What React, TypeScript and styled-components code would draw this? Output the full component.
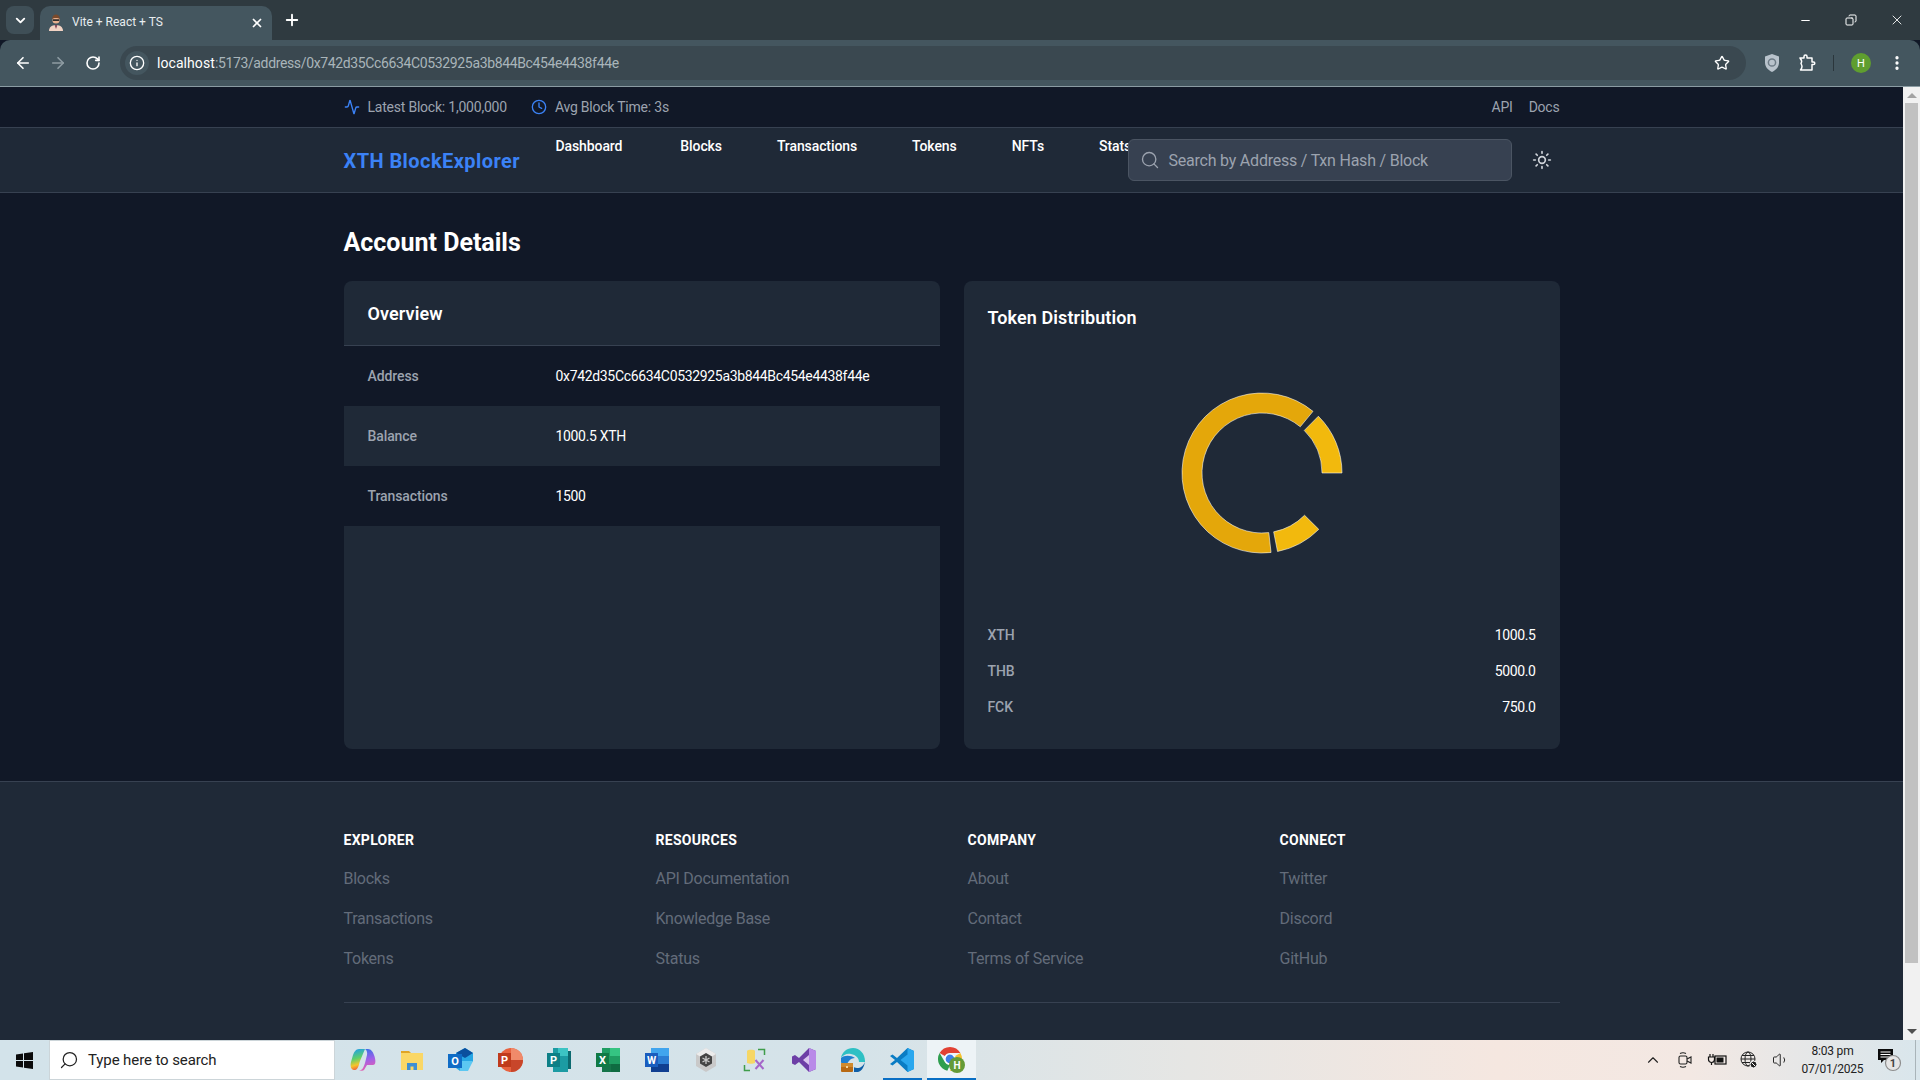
import React from "react"
import styled, { createGlobalStyle } from "styled-components"
import {
    Activity, ArrowLeft, ArrowRight, ChevronDown, ChevronUp, Clock, Copy, EllipsisVertical,
    Info, Minus, Plus, RotateCw, Search, Star, Sun, Volume1, X,
} from "lucide-react"

const UI_FONT = `Roboto, "Liberation Sans", sans-serif`

const GlobalStyle = createGlobalStyle`
    html, body {
        margin: 0;
        height: 100%;
        overflow: hidden;
        background: #111827;
        font-family: ${UI_FONT};
    }
    * {
        box-sizing: border-box;
    }
`

const Screen = styled.div`
    display: flex;
    flex-direction: column;
    height: 1080px;
    width: 1920px;
    overflow: hidden;
`

/* browser chrome */

const TabStrip = styled.div`
    display: flex;
    align-items: flex-end;
    height: 40px;
    flex-shrink: 0;
    background: #2f3a40;
    color: #fff;
    padding-left: 6px;
`

const TabListButton = styled.div`
    display: flex;
    align-items: center;
    justify-content: center;
    width: 28px;
    height: 28px;
    border-radius: 8px;
    background: #3f4f57;
    margin-bottom: 6px;
    margin-right: 6px;
`

const Tab = styled.div`
    display: flex;
    align-items: center;
    width: 232px;
    height: 34px;
    padding: 0 8px 0 8px;
    background: #44565f;
    border-radius: 10px 10px 0 0;
    font-size: 12px;
    gap: 8px;
`

const TabTitle = styled.span`
    flex: 1;
    color: #e8edef;
    margin-bottom: 3px;
`

const NewTab = styled.div`
    display: flex;
    align-items: center;
    justify-content: center;
    width: 28px;
    height: 28px;
    margin: 0 0 6px 6px;
`

const WindowControls = styled.div`
    display: flex;
    margin-left: auto;
    align-self: flex-start;
`

const WindowButton = styled.div`
    display: flex;
    align-items: center;
    justify-content: center;
    width: 46px;
    height: 40px;
`

const Toolbar = styled.div`
    display: flex;
    align-items: center;
    height: 47px;
    flex-shrink: 0;
    background: #44565f;
    border-bottom: 1px solid #8b9ca3;
    border-radius: 10px 10px 0 0;
    padding: 0 11px 0 5px;
    color: #fff;
`

const NavIcon = styled.div<{ $dim?: boolean }>`
    display: flex;
    align-items: center;
    justify-content: center;
    width: 35px;
    height: 34px;
    color: ${props => (props.$dim ? "#8e9ca3" : "#fff")};
`

const Omnibox = styled.div`
    display: flex;
    align-items: center;
    width: 1626px;
    height: 34px;
    margin-left: 10px;
    border-radius: 17px;
    background: #3a4850;
    padding: 0 16px 0 5px;
    font-size: 14px;
`

const SiteInfo = styled.div`
    display: flex;
    align-items: center;
    justify-content: center;
    width: 24px;
    height: 24px;
    border-radius: 50%;
    background: #44565f;
    margin-right: 8px;
`

const Url = styled.div`
    flex: 1;
    color: #a9b5ba;
    letter-spacing: -0.36px;
    b {
        font-weight: 400;
        color: #fff;
        letter-spacing: 0.07px;
    }
`

const ToolbarActions = styled.div`
    display: flex;
    align-items: center;
    margin-left: 17px;
    gap: 17px;
`

const ToolbarDivider = styled.div`
    width: 1px;
    height: 16px;
    background: #2b363c;
`

const Avatar = styled.div`
    display: flex;
    align-items: center;
    justify-content: center;
    width: 20px;
    height: 20px;
    border-radius: 50%;
    background: #5f9e2f;
    color: #fff;
    font-size: 11px;
`

/* the page */

const Viewport = styled.div`
    display: flex;
    flex: 1;
    min-height: 0;
`

const Page = styled.div`
    width: 1903px;
    overflow: hidden;
    background: #111827;
`

const Scrollbar = styled.div`
    display: flex;
    flex-direction: column;
    align-items: center;
    justify-content: space-between;
    width: 17px;
    background: #f1f1f1;
    padding-top: 6px;
    padding-bottom: 6px;
    position: relative;
`

const ScrollArrow = styled.div<{ $down?: boolean }>`
    width: 0;
    height: 0;
    border-left: 5px solid transparent;
    border-right: 5px solid transparent;
    ${props => (props.$down ? "border-top: 5px solid #505050;" : "border-bottom: 5px solid #a3a3a3;")}
`

const ScrollThumb = styled.div`
    position: absolute;
    top: 16px;
    left: 2px;
    width: 13px;
    height: 860px;
    background: #c1c1c1;
`

const Container = styled.div`
    max-width: 1280px;
    margin: 0 auto;
    padding: 0 32px;
`

const TopBar = styled.div`
    height: 41px;
    border-bottom: 1px solid #374151;
    font-size: 14px;
    color: #9ca3af;
`

const TopBarInner = styled(Container)`
    display: flex;
    align-items: center;
    justify-content: space-between;
    height: 40px;
    letter-spacing: -0.22px;
`

const TopBarGroup = styled.div`
    display: flex;
    align-items: center;
    gap: 16px;
`

const Stat = styled.div`
    display: flex;
    align-items: center;
    gap: 8px;
    margin-right: 8px;
    color: #9ca3af;
    svg {
        color: #3b82f6;
    }
`

const NavBar = styled.div`
    height: 65px;
    background: #1f2937;
    border-bottom: 1px solid #374151;
`

const NavInner = styled(Container)`
    display: flex;
    align-items: center;
    height: 64px;
`

const Logo = styled.div`
    font-size: 20px;
    font-weight: 700;
    color: #3b82f6;
    width: 212px;
    flex-shrink: 0;
    letter-spacing: 0.43px;
    margin-top: 1px;
`

const NavLinks = styled.div`
    display: flex;
    align-self: flex-start;
    gap: 55px;
    width: 572px;
    flex-shrink: 0;
    margin-top: 8px;
    font-size: 14px;
    line-height: 20px;
    font-weight: 500;
    letter-spacing: -0.1px;
    color: #fff;
    span:first-child {
        padding-right: 3px;
    }
`

const SearchBox = styled.div`
    display: flex;
    align-items: center;
    width: 384px;
    height: 42px;
    gap: 9px;
    padding: 0 11px;
    background: #374151;
    border: 1px solid #4b5563;
    border-radius: 6px;
    font-size: 16px;
    letter-spacing: -0.22px;
    color: #9ca3af;
`

const ThemeToggle = styled.div`
    display: flex;
    margin-left: 20px;
    color: #d1d5db;
`

const Main = styled(Container)`
    padding-top: 34px;
    padding-bottom: 32px;
`

const Heading = styled.h1`
    margin: 0 0 22px;
    font-size: 25px;
    line-height: 32px;
    font-weight: 700;
    color: #fff;
`

const Columns = styled.div`
    display: grid;
    grid-template-columns: 1fr 1fr;
    gap: 24px;
    height: 468px;
`

const Card = styled.div`
    background: #1f2937;
    border-radius: 8px;
    overflow: hidden;
`

const CardHeader = styled.div`
    height: 65px;
    padding: 21px 24px 0;
    border-bottom: 1px solid #374151;
    font-size: 18px;
    line-height: 24px;
    font-weight: 600;
    letter-spacing: 0.1px;
    color: #fff;
`

const DetailRow = styled.div<{ $stripe?: boolean }>`
    display: flex;
    align-items: center;
    height: 60px;
    padding: 0 24px;
    font-size: 14px;
    background: ${props => (props.$stripe ? "#1f2937" : "#111827")};
`

const DetailLabel = styled.div`
    width: 188px;
    font-weight: 500;
    letter-spacing: -0.1px;
    color: #9ca3af;
`

const DetailValue = styled.div`
    color: #fff;
    letter-spacing: -0.33px;
`

const DistributionBody = styled.div`
    padding: 25px 24px 24px;
`

const DistributionTitle = styled.div`
    font-size: 18px;
    line-height: 24px;
    font-weight: 600;
    letter-spacing: 0.1px;
    color: #fff;
`

const ChartWrap = styled.div`
    display: flex;
    align-items: center;
    justify-content: center;
    height: 256px;
    margin-top: 15px;
`

const Legend = styled.div`
    display: flex;
    flex-direction: column;
    gap: 16px;
    margin-top: 24px;
`

const LegendRow = styled.div`
    display: flex;
    justify-content: space-between;
    font-size: 14px;
    line-height: 20px;
    color: #fff;
    letter-spacing: -0.4px;
    span:first-child {
        color: #9ca3af;
        font-weight: 500;
        letter-spacing: -0.1px;
    }
`

const Footer = styled.div`
    background: #1f2937;
    border-top: 1px solid #374151;
    height: 300px;
    padding-top: 48px;
`

const FooterGrid = styled.div`
    display: grid;
    grid-template-columns: repeat(4, 1fr);
    gap: 32px;
`

const FooterTitle = styled.div`
    font-size: 14px;
    line-height: 20px;
    font-weight: 700;
    letter-spacing: 0.3px;
    color: #fff;
    text-transform: uppercase;
    margin-bottom: 17px;
`

const FooterLink = styled.div`
    font-size: 16px;
    line-height: 24px;
    letter-spacing: -0.25px;
    color: #636c7a;
    margin-bottom: 16px;
    &:last-child {
        margin-bottom: 0;
    }
`

const FooterRule = styled.div`
    height: 1px;
    margin-top: 31px;
    background: #374151;
`

/* windows taskbar */

const Taskbar = styled.div`
    display: flex;
    align-items: center;
    height: 40px;
    flex-shrink: 0;
    background: linear-gradient(90deg, #d3e3ea 0%, #d5e3e9 45%, #e6e6e4 62%, #f5e7e0 78%, #f3e8e3 88%, #d9e6ec 100%);
    color: #111;
`

const StartButton = styled.div`
    display: flex;
    align-items: center;
    justify-content: center;
    width: 49px;
    height: 40px;
`

const TaskSearch = styled.div`
    display: flex;
    align-items: center;
    gap: 9px;
    width: 286px;
    height: 40px;
    padding-left: 9px;
    background: #fff;
    border: 1px solid #ccd5d9;
    font-size: 15px;
    letter-spacing: -0.1px;
    color: #222;
`

const TaskIcons = styled.div`
    display: flex;
    margin-left: 3.5px;
`

const TaskIcon = styled.div<{ $active?: boolean; $running?: boolean }>`
    position: relative;
    display: flex;
    align-items: center;
    justify-content: center;
    width: 49px;
    height: 40px;
    background: ${props => (props.$active ? "#edf3f6" : "transparent")};
    &::after {
        content: "";
        display: ${props => (props.$running ? "block" : "none")};
        position: absolute;
        left: ${props => (props.$active ? "0" : "5px")};
        right: ${props => (props.$active ? "0" : "5px")};
        bottom: 0;
        height: 2px;
        background: #0a6fc4;
    }
`

const Tray = styled.div`
    display: flex;
    align-items: center;
    margin-left: auto;
    height: 40px;
    color: #222;
`

const TrayIcon = styled.div`
    display: flex;
    align-items: center;
    justify-content: center;
    width: 32px;
`

const TrayClock = styled.div`
    width: 71px;
    text-align: center;
    font-size: 12px;
    line-height: 18px;
    letter-spacing: -0.2px;
    color: #222;
`

const Notice = styled.div`
    display: flex;
    align-items: center;
    justify-content: center;
    width: 47px;
    padding-right: 4px;
`

const TrayEdge = styled.div`
    width: 1px;
    height: 40px;
    background: #a9b4b9;
    margin-right: 4px;
`

// angles in degrees, counter clockwise from 3 o'clock like a recharts pie
const arcPath = (cx: number, cy: number, inner: number, outer: number, from: number, to: number) => {
    const point = (r: number, a: number) => {
        const rad = (a * Math.PI) / 180
        return `${(cx + r * Math.cos(rad)).toFixed(2)} ${(cy - r * Math.sin(rad)).toFixed(2)}`
    }
    const large = to - from > 180 ? 1 : 0
    return `M${point(outer, from)} A${outer} ${outer} 0 ${large} 0 ${point(outer, to)} L${point(inner, to)} A${inner} ${inner} 0 ${large} 1 ${point(inner, from)} Z`
}

const DonutChart = () => (
    <svg width="164" height="164" viewBox="0 0 164 164">
        <path d={arcPath(82, 82, 60, 80, 0, 45.2)} fill="#f2b90d" stroke="#fff" strokeOpacity={0.7} strokeWidth={0.8} />
        <path d={arcPath(82, 82, 60, 80, 50.4, 276.5)} fill="#e4a70a" stroke="#fff" strokeOpacity={0.7} strokeWidth={0.8} />
        <path d={arcPath(82, 82, 60, 80, 281.2, 315.2)} fill="#f2b90d" stroke="#fff" strokeOpacity={0.7} strokeWidth={0.8} />
    </svg>
)

const Favicon = () => (
    <svg width="16" height="18" viewBox="0 0 16 18">
        <path d="M1 17c0-4 3-6 7-6s7 2 7 6z" fill="#f2d3c4" />
        <path d="M6.5 11l1.5 4 1.5-4z" fill="#8a4a5a" />
        <circle cx="8" cy="6" r="3.6" fill="#e8b08e" />
        <path d="M4.2 5c0-3 1.5-4.5 3.8-4.5S11.800 2 11.800 5c-1-1.500-6.600-1.500-7.600 0z" fill="#7a4a2c" />
        <rect x="4.800" y="5.300" width="6.400" height="1.600" fill="#222" />
    </svg>
)

const ShieldIcon = () => (
    <svg width="18" height="20" viewBox="0 0 18 20">
        <path d="M9 1l7 2.500v6c0 4.500-3 7.500-7 9.500-4-2-7-5-7-9.500v-6z" fill="#b9c3cc" />
        <circle cx="9" cy="9.500" r="3.600" fill="none" stroke="#6d7b86" strokeWidth="1.500" />
    </svg>
)

const PuzzleIcon = () => (
    <svg width="18" height="18" viewBox="0 0 18 18" fill="none" stroke="#fff" strokeWidth="1.500" strokeLinejoin="round">
        <path d="M2 4h4V2.500a1.500 1.500 0 0 1 3 0V4h5v4h1.500a1.300 1.300 0 0 1 0 2.600H14V16H2.500c.8-1 1.500-2 1.500-3.500 0-1-.5-2-1-3 .5-1.200 1-2 .5-3z" />
    </svg>
)

const WindowsLogo = () => (
    <svg width="17" height="17" viewBox="0 0 17 17" fill="#0b0b0b">
        <path d="M0 2.400l7-1v6.600H0zM8 1.200L17 0v8H8zM0 9h7v6.600l-7-1zM8 9h9v8l-9-1.200z" />
    </svg>
)

const CopilotIcon = () => (
    <svg width="26" height="26" viewBox="0 0 26 26">
        <defs>
            <linearGradient id="copilotA" x1="0.3" y1="0" x2="0.5" y2="1">
                <stop offset="0" stopColor="#1f9fe8" />
                <stop offset="0.45" stopColor="#5fd06a" />
                <stop offset="0.75" stopColor="#f7c52b" />
                <stop offset="1" stopColor="#f0553a" />
            </linearGradient>
            <linearGradient id="copilotB" x1="0.4" y1="0" x2="0.6" y2="1">
                <stop offset="0" stopColor="#3a6fe8" />
                <stop offset="0.5" stopColor="#a060e8" />
                <stop offset="1" stopColor="#ee60a8" />
            </linearGradient>
        </defs>
        <path d="M9 2h6L10 14c-1 3-2 9-5 9H4c-3 0-4-4-3-8l2-7c1-3 3-6 6-6z" fill="url(#copilotA)" />
        <path d="M15 2h3c3 0 5 3 6 6 2 5 2 10-1 10h-6l-3 5c-1 1-3 1-5 0h2c2-1 3-4 4-7l2-8c.5-2 0-5-2-6z" fill="url(#copilotB)" />
    </svg>
)

const FolderIcon = () => (
    <svg width="24" height="22" viewBox="0 0 24 22">
        <path d="M1 2h8l2 2h-10z" fill="#e0a526" />
        <rect x="1" y="4" width="22" height="17" fill="#fad766" />
        <path d="M7 21v-7h10v7h-3.500v-3.500h-3V21z" fill="#3f8fd2" />
    </svg>
)

const TileLetter = styled.text`
    font-family: ${UI_FONT};
    font-weight: 700;
    fill: #fff;
    text-anchor: middle;
`

const OutlookIcon = () => (
    <svg width="26" height="24" viewBox="0 0 26 24">
        <path d="M8 5l9-5 8 5v8l-8 10H12l-4-3z" fill="#26a6e4" />
        <path d="M17 0l8 5-8 5-9-5z" fill="#0a4f9e" />
        <path d="M12 13h13l-5 10h-8z" fill="#5cc8f2" />
        <rect x="0" y="6" width="14" height="14" fill="#0f6cc6" />
        <TileLetter x="7" y="17" fontSize="11">O</TileLetter>
    </svg>
)

const PowerPointIcon = () => (
    <svg width="25" height="24" viewBox="0 0 25 24">
        <circle cx="13" cy="12" r="12" fill="#e8623f" />
        <path d="M13 12h12a12 12 0 0 1-12 12z" fill="#c8462a" />
        <path d="M13 0a12 12 0 0 1 12 12H13z" fill="#f08a6a" />
        <rect x="0" y="5" width="13" height="14" fill="#bf3a1c" />
        <TileLetter x="6.500" y="16" fontSize="11">P</TileLetter>
    </svg>
)

const PublisherIcon = () => (
    <svg width="25" height="24" viewBox="0 0 25 24">
        <rect x="6" y="0" width="15" height="24" fill="#1c9ba3" />
        <rect x="11" y="0" width="10" height="8" fill="#3cc4c4" />
        <rect x="21" y="3" width="3" height="18" fill="#0c6a70" />
        <rect x="0" y="5" width="13" height="14" fill="#0d7f86" />
        <TileLetter x="6.500" y="16" fontSize="11">P</TileLetter>
    </svg>
)

const ExcelIcon = () => (
    <svg width="25" height="24" viewBox="0 0 25 24">
        <rect x="6" y="0" width="18" height="24" fill="#1f9d62" />
        <rect x="14" y="0" width="10" height="8" fill="#35c482" />
        <rect x="14" y="16" width="10" height="8" fill="#0f6b41" />
        <rect x="6" y="16" width="9" height="8" fill="#16754a" />
        <rect x="0" y="5" width="13" height="14" fill="#107a45" />
        <TileLetter x="6.500" y="16" fontSize="11">X</TileLetter>
    </svg>
)

const WordIcon = () => (
    <svg width="25" height="24" viewBox="0 0 25 24">
        <rect x="6" y="0" width="18" height="24" fill="#2b7cd3" />
        <rect x="6" y="0" width="18" height="8" fill="#41a5ee" />
        <rect x="6" y="16" width="18" height="8" fill="#103f91" />
        <rect x="0" y="5" width="13" height="14" fill="#1a5dbe" />
        <TileLetter x="6.500" y="16" fontSize="10.500">W</TileLetter>
    </svg>
)

const UnityIcon = () => (
    <svg width="22" height="24" viewBox="0 0 22 24">
        <path d="M11 0l10 6v12l-10 6-10-6V6z" fill="#c9c9c9" />
        <path d="M11 0l10 6-10 6-10-6z" fill="#ececec" />
        <path d="M11 5l6 3.500v7L11 19l-6-3.500v-7z" fill="#444" />
        <path d="M11 8v8M7.500 10l7 4M14.500 10l-7 4" stroke="#c9c9c9" strokeWidth="1.300" />
    </svg>
)

const ToolIcon = () => (
    <svg width="24" height="24" viewBox="0 0 24 24">
        <path d="M4 3c0-1 7-2 8 0v12c-2 1-6 1-8 0z" fill="#f6d765" />
        <path d="M15 1.500h6.500V7M1.500 17v5.500H7" stroke="#3f9d4a" strokeWidth="1.500" fill="none" />
        <path d="M12.500 12l8 9M20.500 12l-8 9" stroke="#a566c9" strokeWidth="2" />
    </svg>
)

const VisualStudioIcon = () => (
    <svg width="24" height="24" viewBox="0 0 24 24">
        <path d="M17 0l7 3v18l-7 3L7 14l-4 3-3-1.500v-7L3 7l4 3z" fill="#6d3fa6" />
        <path d="M17 0l7 3v18l-7 3z" fill="#b98ae8" />
        <path d="M17 7v10l-6-5z" fill="#d9c6ee" />
    </svg>
)

const EdgeIcon = () => (
    <svg width="25" height="24" viewBox="0 0 25 24">
        <path d="M24 13C24 6 19 0 12 0 6 0 1 4 0 10c2-3 6-5 10-4 5 1 8 4 8 8h6z" fill="#2fc0c4" />
        <path d="M0 10c-1 6 3 12 9 14-3-3-4-8-1-11 1-2 4-3 6-3-4-3-11-3-14 0z" fill="#1d7fd0" />
        <path d="M24 14c-2 4-4 6-8 6-2 0-3-1-3-1v5h4c4-1 6-5 7-10z" fill="#0f5fa8" />
        <rect x="0" y="15" width="12" height="9" rx="1" fill="#b86a14" />
        <rect x="0" y="15" width="12" height="4" fill="#d08a2e" />
        <rect x="5" y="18" width="2" height="2" fill="#f3d69c" />
    </svg>
)

const VsCodeIcon = () => (
    <svg width="24" height="24" viewBox="0 0 24 24">
        <path d="M17.500 0L24 3v18l-6.500 3L7 14l-4.500 3.500L0 16l5-4-5-4 2.500-1.500L7 10z" fill="#0a7cc4" />
        <path d="M17.500 0L24 3v18l-6.500 3zM17.500 6.500L10.500 12l7 5.500z" fill="#2aa7ee" fillRule="evenodd" />
    </svg>
)

const ChromeIcon = () => (
    <svg width="27" height="26" viewBox="0 0 27 26">
        <path d="M12 0a12 12 0 0 1 10.400 6H12a6 6 0 0 0-5.200 3L1.600 6A12 12 0 0 1 12 0z" fill="#e24133" />
        <path d="M22.400 6a12 12 0 0 1-10.400 18l5.200-9a6 6 0 0 0 0-6z" fill="#f6c02c" />
        <path d="M1.600 6l5.200 9a6 6 0 0 0 5.200 3l-2.700 5.700A12 12 0 0 1 1.600 6z" fill="#2f9e4f" />
        <circle cx="12" cy="12" r="5" fill="#3f7fe6" stroke="#fff" strokeWidth="1.200" />
        <circle cx="19" cy="18" r="8" fill="#659b37" />
        <TileLetter x="19" y="21.500" fontSize="10">H</TileLetter>
    </svg>
)

const CameraIcon = () => (
    <svg width="14" height="18" viewBox="0 0 14 18" fill="none" stroke="#222" strokeWidth="1.100">
        <rect x="1" y="5" width="8" height="8" rx="1.500" />
        <path d="M9 8l4-2v6l-4-2M2 2.500c2-1 4-1 6 0M2 15.500c2 1 4 1 6 0" />
    </svg>
)

const BatteryIcon = () => (
    <svg width="20" height="14" viewBox="0 0 20 14">
        <path d="M3 1v3M6 1v3M1.500 4h6v2.500a3 3 0 0 1-6 0zM4.500 9v3" stroke="#111" strokeWidth="1.200" fill="none" />
        <rect x="8" y="3" width="11" height="8" fill="none" stroke="#111" strokeWidth="1.200" />
        <rect x="9.500" y="4.500" width="7" height="5" fill="#111" />
    </svg>
)

const NoInternetIcon = () => (
    <svg width="18" height="18" viewBox="0 0 18 18" fill="none" stroke="#222" strokeWidth="1">
        <circle cx="8" cy="8" r="7" />
        <ellipse cx="8" cy="8" rx="3" ry="7" />
        <path d="M1 8h14M2 4.500h12M2 11.500h12" />
        <circle cx="13.500" cy="13.500" r="3.500" fill="#222" stroke="#fff" />
        <path d="M11.500 11.500l4 4" stroke="#fff" />
    </svg>
)

const NoticeIcon = () => (
    <svg width="26" height="24" viewBox="0 0 26 24">
        <path d="M1 1h15v11H7l-3 3v-3H1z" fill="#0b0b0b" />
        <path d="M3.500 4h10M3.500 6.500h10M3.500 9h10" stroke="#fff" strokeWidth="1" />
        <circle cx="16" cy="15" r="7.500" fill="#e5e5e5" stroke="#8d8d8d" strokeWidth="1.200" />
        <TileLetter x="16" y="19" fontSize="11" style={{ fill: "#444" }}>1</TileLetter>
    </svg>
)

const footerColumns = [
    { title: "Explorer", links: ["Blocks", "Transactions", "Tokens"] },
    { title: "Resources", links: ["API Documentation", "Knowledge Base", "Status"] },
    { title: "Company", links: ["About", "Contact", "Terms of Service"] },
    { title: "Connect", links: ["Twitter", "Discord", "GitHub"] },
]

const details = [
    { label: "Address", value: "0x742d35Cc6634C0532925a3b844Bc454e4438f44e" },
    { label: "Balance", value: "1000.5 XTH" },
    { label: "Transactions", value: "1500" },
]

const tokens = [
    { symbol: "XTH", amount: "1000.5" },
    { symbol: "THB", amount: "5000.0" },
    { symbol: "FCK", amount: "750.0" },
]

const navLinks = ["Dashboard", "Blocks", "Transactions", "Tokens", "NFTs", "Stats"]

const taskApps = [
    <CopilotIcon />, <FolderIcon />, <OutlookIcon />, <PowerPointIcon />, <PublisherIcon />, <ExcelIcon />,
    <WordIcon />, <UnityIcon />, <ToolIcon />, <VisualStudioIcon />, <EdgeIcon />,
]

const App: React.FC = () => {
    return <Screen>
        <GlobalStyle />
        <TabStrip>
            <TabListButton><ChevronDown size={15} strokeWidth={3} /></TabListButton>
            <Tab>
                <Favicon />
                <TabTitle>Vite + React + TS</TabTitle>
                <X size={14} strokeWidth={3} />
            </Tab>
            <NewTab><Plus size={18} strokeWidth={2.5} /></NewTab>
            <WindowControls>
                <WindowButton><Minus size={13} /></WindowButton>
                <WindowButton><Copy size={12} style={{ transform: "scaleX(-1)" }} /></WindowButton>
                <WindowButton><X size={16} strokeWidth={1.3} /></WindowButton>
            </WindowControls>
        </TabStrip>
        <Toolbar>
            <NavIcon><ArrowLeft size={18} strokeWidth={2.2} /></NavIcon>
            <NavIcon $dim><ArrowRight size={18} strokeWidth={2.2} /></NavIcon>
            <NavIcon><RotateCw size={16} strokeWidth={2.4} /></NavIcon>
            <Omnibox>
                <SiteInfo><Info size={16} /></SiteInfo>
                <Url><b>localhost</b>:5173/address/0x742d35Cc6634C0532925a3b844Bc454e4438f44e</Url>
                <Star size={16} strokeWidth={2} />
            </Omnibox>
            <ToolbarActions>
                <ShieldIcon />
                <PuzzleIcon />
                <ToolbarDivider />
                <Avatar>H</Avatar>
                <EllipsisVertical size={18} strokeWidth={2.4} />
            </ToolbarActions>
        </Toolbar>
        <Viewport>
            <Page>
                <TopBar>
                    <TopBarInner>
                        <TopBarGroup>
                            <Stat><Activity size={16} />Latest Block: 1,000,000</Stat>
                            <Stat><Clock size={16} />Avg Block Time: 3s</Stat>
                        </TopBarGroup>
                        <TopBarGroup>
                            <span>API</span>
                            <span>Docs</span>
                        </TopBarGroup>
                    </TopBarInner>
                </TopBar>
                <NavBar>
                    <NavInner>
                        <Logo>XTH BlockExplorer</Logo>
                        <NavLinks>
                            {navLinks.map(link => <span key={link}>{link}</span>)}
                        </NavLinks>
                        <SearchBox>
                            <Search size={20} strokeWidth={1.6} />
                            Search by Address / Txn Hash / Block
                        </SearchBox>
                        <ThemeToggle><Sun size={20} /></ThemeToggle>
                    </NavInner>
                </NavBar>
                <Main>
                    <Heading>Account Details</Heading>
                    <Columns>
                        <Card>
                            <CardHeader>Overview</CardHeader>
                            {details.map((row, i) => (
                                <DetailRow key={row.label} $stripe={i % 2 === 1}>
                                    <DetailLabel>{row.label}</DetailLabel>
                                    <DetailValue>{row.value}</DetailValue>
                                </DetailRow>
                            ))}
                        </Card>
                        <Card>
                            <DistributionBody>
                                <DistributionTitle>Token Distribution</DistributionTitle>
                                <ChartWrap><DonutChart /></ChartWrap>
                                <Legend>
                                    {tokens.map(token => (
                                        <LegendRow key={token.symbol}>
                                            <span>{token.symbol}</span>
                                            <span>{token.amount}</span>
                                        </LegendRow>
                                    ))}
                                </Legend>
                            </DistributionBody>
                        </Card>
                    </Columns>
                </Main>
                <Footer>
                    <Container>
                        <FooterGrid>
                            {footerColumns.map(col => (
                                <div key={col.title}>
                                    <FooterTitle>{col.title}</FooterTitle>
                                    {col.links.map(link => <FooterLink key={link}>{link}</FooterLink>)}
                                </div>
                            ))}
                        </FooterGrid>
                        <FooterRule />
                    </Container>
                </Footer>
            </Page>
            <Scrollbar>
                <ScrollArrow />
                <ScrollThumb />
                <ScrollArrow $down />
            </Scrollbar>
        </Viewport>
        <Taskbar>
            <StartButton><WindowsLogo /></StartButton>
            <TaskSearch>
                <Search size={20} strokeWidth={1.5} style={{ transform: "scaleX(-1)" }} />
                Type here to search
            </TaskSearch>
            <TaskIcons>
                {taskApps.map((icon, i) => <TaskIcon key={i}>{icon}</TaskIcon>)}
                <TaskIcon $running><VsCodeIcon /></TaskIcon>
                <TaskIcon $running $active><ChromeIcon /></TaskIcon>
            </TaskIcons>
            <Tray>
                <TrayIcon><ChevronUp size={18} strokeWidth={1.5} /></TrayIcon>
                <TrayIcon><CameraIcon /></TrayIcon>
                <TrayIcon><BatteryIcon /></TrayIcon>
                <TrayIcon><NoInternetIcon /></TrayIcon>
                <TrayIcon><Volume1 size={18} strokeWidth={1.3} /></TrayIcon>
                <TrayClock>8:03 pm<br />07/01/2025</TrayClock>
                <Notice><NoticeIcon /></Notice>
                <TrayEdge />
            </Tray>
        </Taskbar>
    </Screen>
}

export default App
